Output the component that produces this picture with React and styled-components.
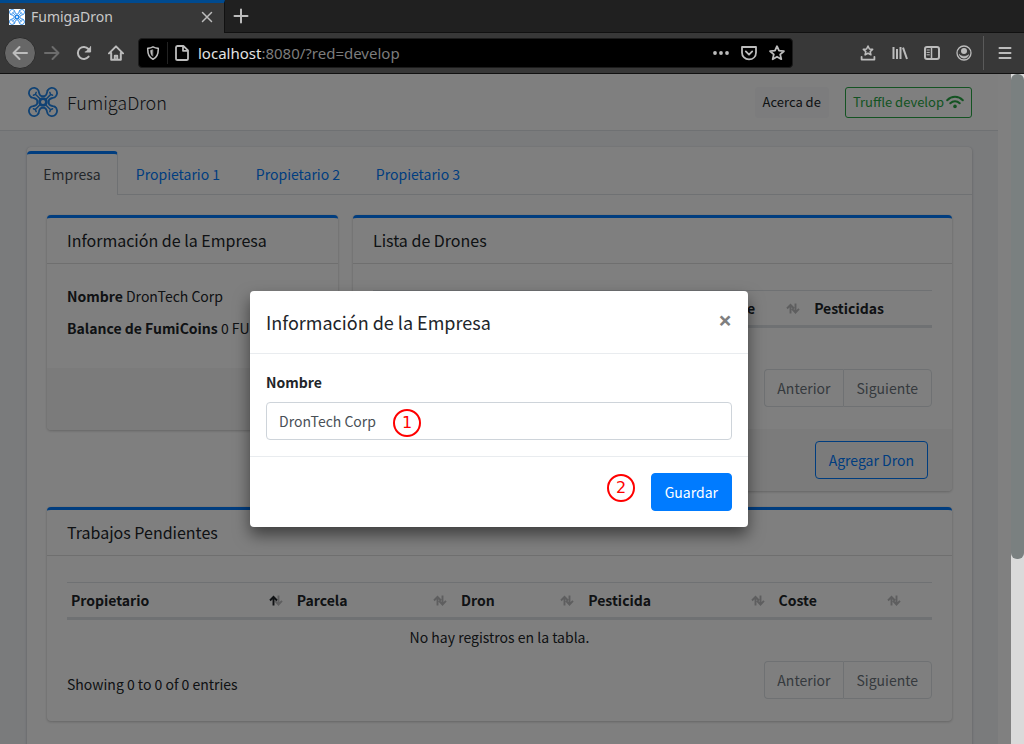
import React from 'react';
import styled, { createGlobalStyle, css } from 'styled-components';

const sans = '"Noto Sans CJK SC", "Noto Sans", sans-serif';
const ui = '"Noto Sans", "Open Sans", sans-serif';

const GlobalStyle = createGlobalStyle`
  *, *::before, *::after { box-sizing: border-box; }
  body { margin: 0; font: 400 14px/24px ${sans}; color: #212529; }
  h1, h2, p { margin: 0; font-weight: 400; }
  button, input { font: inherit; color: inherit; margin: 0; }
  svg { display: block; flex: none; }
`;

const Window = styled.div`
  display: flex;
  flex-direction: column;
  height: 100vh;
  overflow: hidden;
  background: #383838;
`;

/* Browser chrome */
const TabStrip = styled.div`
  display: flex;
  flex: none;
  height: 33px;
  background: #202020;
  border-bottom: 1px solid #111;
  font-family: ${ui};
`;

const BrowserTab = styled.div`
  display: flex;
  align-items: center;
  width: 225px;
  height: 33px;
  padding: 0 11px 2px 9px;
  gap: 6px;
  background: #383838;
  border-top: 3px solid #004a8f;
  border-right: 1px solid #111;
  color: #c8c8c8;
  font-size: 14px;
`;

const TabTitle = styled.span`
  flex: 1;
`;

const Favicon = styled.span`
  width: 16px;
  height: 16px;
  background: #fff;
`;

const ChromeButton = styled.button`
  display: grid;
  place-items: center;
  flex: none;
  width: ${(p) => p.$w || 32}px;
  height: 32px;
  padding: 0;
  border: 0;
  background: none;
  color: ${(p) => (p.$dim ? '#6c6c6c' : '#bcbcbc')};
  ${(p) => p.$round && css`
    border-radius: 50%;
    background: #676767;
    border: 1px solid #2c2c2c;
  `}
`;

const Toolbar = styled.div`
  display: flex;
  align-items: center;
  flex: none;
  height: 41px;
  padding: 0 3px 0 4px;
  border-bottom: 1px solid #111;
`;

const UrlBar = styled.div`
  display: flex;
  align-items: center;
  flex: 1;
  height: 30px;
  margin: 0 59px 0 6px;
  padding-right: 1px;
  background: #000;
  border: 1px solid #1c1c1c;
  border-radius: 4px;
`;

const UrlDivider = styled.span`
  width: 1px;
  height: 22px;
  background: #222;
`;

const UrlText = styled.span`
  flex: 1;
  padding-left: 2px;
  font-family: ${ui};
  font-size: 15px;
  line-height: 28px;
  color: #7c7c7c;
  b { font-weight: 400; color: #e2e2e2; }
`;

const ToolDivider = styled.span`
  width: 1px;
  height: 34px;
  margin: 0 5px 0 3px;
  background: #5a5a5a;
`;

const Viewport = styled.div`
  display: flex;
  flex: 1;
  min-height: 0;
`;

const Page = styled.div`
  position: relative;
  flex: 1;
  min-width: 0;
  overflow: hidden;
  background: #f4f6f9;
`;

const Gutter = styled.div`
  flex: none;
  width: 13px;
  background: #808080;
`;

const ScrollTrack = styled.div`
  flex: none;
  width: 13px;
  background: #dadada;
`;

const ScrollThumb = styled.div`
  height: 485px;
  border-radius: 6px;
  background: #7a8080;
`;

/* Application */
const Header = styled.header`
  display: flex;
  align-items: center;
  gap: 16px;
  height: 57px;
  padding: 0 26px 0 28px;
  background: #fff;
  border-bottom: 1px solid #dee2e6;
`;

const Brand = styled.a`
  display: flex;
  align-items: center;
  gap: 9px;
  margin-right: auto;
  color: #212529;
  font-size: 18px;
  font-weight: 300;
  text-decoration: none;
`;

const Button = styled.button`
  display: flex;
  align-items: center;
  gap: 2px;
  height: ${(p) => (p.$small ? 31 : 38)}px;
  padding: 0 ${(p) => (p.$small ? 7 : 13)}px;
  font-size: ${(p) => (p.$small ? 13 : 14)}px;
  border: 1px solid ${(p) => p.$border || p.$bg};
  border-radius: ${(p) => (p.$small ? 3 : 4)}px;
  background: ${(p) => p.$bg || 'transparent'};
  color: ${(p) => p.$color};
`;

const Main = styled.main`
  padding: 16px 26px 16px 27px;
`;

const shadow = '0 0 1px rgba(0,0,0,.125), 0 1px 3px rgba(0,0,0,.2)';

const Panel = styled.div`
  background: #fff;
  border-radius: 4px;
  box-shadow: ${shadow};
`;

const Tabs = styled.nav`
  display: flex;
  padding-top: 4px;
  border-bottom: 1px solid #dee2e6;
`;

const Tab = styled.a`
  min-width: 120px;
  height: 44px;
  margin-bottom: -1px;
  padding: 8px 16px;
  border-top: 3px solid transparent;
  color: #007bff;
  text-align: center;
  text-decoration: none;
  ${(p) => p.$active && css`
    min-width: 91px;
    color: #495057;
    background: #fff;
    border-top-color: #007bff;
    border-right: 1px solid #dee2e6;
    border-radius: 4px 4px 0 0;
  `}
`;

const Cards = styled.div`
  display: grid;
  grid-template-columns: 291fr 599fr;
  gap: 16px 15px;
  align-items: start;
  padding: 20px 20px 40px;
`;

const CardBox = styled.section`
  grid-column: ${(p) => (p.$wide ? '1 / -1' : 'auto')};
  background: #fff;
  border-top: 3px solid #007bff;
  border-radius: 4px;
  box-shadow: ${shadow};
`;

const CardTitle = styled.h2`
  padding: 10px 20px 11px;
  font-size: 16px;
  line-height: 24px;
  border-bottom: 1px solid #dfdfdf;
`;

const CardBody = styled.div`
  padding: ${(p) => (p.$table ? '26px 20px 22px' : '20px 20px 28px')};
`;

const Fact = styled.p`
  & + & { margin-top: 8px; }
`;

const CardFooter = styled.div`
  display: flex;
  justify-content: flex-end;
  min-height: 62px;
  padding: 12px 24px;
  background: #f7f7f7;
  border-radius: 0 0 4px 4px;
`;

const Table = styled.table`
  width: 100%;
  table-layout: fixed;
  border-spacing: 0;
  white-space: nowrap;
`;

const Th = styled.th`
  padding: 5px 10px 5px 4px;
  text-align: left;
  border-top: 1px solid #dee2e6;
  border-bottom: 3px solid #dee2e6;
`;

const ThInner = styled.span`
  display: flex;
  align-items: center;
  justify-content: space-between;
`;

const EmptyCell = styled.td`
  padding: 5px 4px;
  text-align: center;
`;

const TableFoot = styled.div`
  display: flex;
  align-items: center;
  justify-content: space-between;
  padding-top: 7px;
`;

const TableInfo = styled.p`
  padding-top: 8px;
`;

const Pager = styled.div`
  display: flex;
`;

const PageButton = styled.button`
  height: 38px;
  padding: 0 12px;
  border: 1px solid #dee2e6;
  background: #fff;
  color: #6c757d;
  &:first-child { border-right: 0; padding: 0 13px 0 12px; border-radius: 4px 0 0 4px; }
  &:last-child { padding: 0 13px 0 12px; border-radius: 0 4px 4px 0; }
`;

/* Modal */
const Overlay = styled.div`
  position: absolute;
  inset: 0;
  display: grid;
  place-items: center;
  background: rgba(0, 0, 0, 0.5);
`;

const Dialog = styled.form`
  width: 100%;
  max-width: 498px;
  background: #fff;
  border-radius: 4px;
  box-shadow: 0 8px 16px rgba(0, 0, 0, 0.5);
`;

const DialogHeader = styled.div`
  display: flex;
  justify-content: space-between;
  padding: 16px;
  border-bottom: 1px solid #e9ecef;
`;

const DialogTitle = styled.h2`
  font-size: 18px;
  line-height: 30px;
`;

const Close = styled.button`
  height: 26px;
  padding: 0;
  border: 0;
  background: none;
  color: #7f7f7f;
  font: 700 24px/26px ${ui};
`;

const DialogBody = styled.div`
  padding: 16px;
`;

const Label = styled.label`
  display: block;
  margin-bottom: 8px;
  font-weight: 700;
`;

const Field = styled.div`
  position: relative;
`;

const Input = styled.input`
  display: block;
  width: 100%;
  height: 38px;
  padding: 0 12px;
  border: 1px solid #ced4da;
  border-radius: 4px;
  background: #fff;
  color: #495057;
`;

const DialogFooter = styled.div`
  position: relative;
  display: flex;
  justify-content: flex-end;
  padding: 16px;
  border-top: 1px solid #e9ecef;
`;

const Marker = styled.span`
  position: absolute;
  display: grid;
  place-items: center;
  width: 28px;
  height: 28px;
  border: 2px solid #f00;
  border-radius: 50%;
  color: #f00;
  font: 16px/24px "DejaVu Sans", sans-serif;
`;

const FieldMarker = styled(Marker)`
  top: 7px;
  left: 127px;
`;

const FooterMarker = styled(Marker)`
  top: 17px;
  right: 113px;
`;

/* Drawings */
const Icon = ({ children, size = 16, sw = 2 }) => (
  <svg width={size} height={size} viewBox="0 0 16 16" fill="none" stroke="currentColor" strokeWidth={sw} strokeLinecap="round" strokeLinejoin="round" aria-hidden="true">
    {children}
  </svg>
);

const Drone = ({ size, color = '#2185e8' }) => (
  <svg width={size} height={size} viewBox="0 0 30 30" fill="none" stroke={color} strokeWidth="1.8" strokeLinecap="round" strokeLinejoin="round" aria-hidden="true">
    {[0, 90, 180, 270].map((a) => (
      <g key={a} transform={`rotate(${a} 15 15)`}>
        <path d="M3.4 10.4A5.1 5.1 0 1 1 10.4 3.4L11 5.6C11.4 7.6 12.2 8.8 13.6 9.2H16.4C17.8 8.8 18.6 7.6 19 5.6L19.6 3.4" />
        <path d="M8.2 5.4L7.4 7.2L12.2 12M5.4 8.2L7.2 7.4" strokeWidth="1.5" />
      </g>
    ))}
    <circle cx="15" cy="15" r="3.4" strokeWidth="2.8" />
  </svg>
);

const SortArrows = ({ active }) => (
  <svg width="14" height="11" viewBox="0 0 14 11" fill="none" stroke="#212529" strokeWidth="1.9" aria-hidden="true">
    <path d="M4.5 10.5V1.5M1 5.5L4.5 1.8L8 5.5" opacity={active ? 1 : 0.3} />
    <path d="M9.5 .5V9.5M6 5.8L9.5 9.5L13 5.8" opacity="0.3" />
  </svg>
);

const Wifi = () => (
  <svg width="18" height="14" viewBox="0 0 18 14" fill="none" stroke="currentColor" strokeWidth="2" strokeLinecap="round" aria-hidden="true">
    <path d="M1.2 5.2C5.6 .6 12.4 .6 16.8 5.2M4.3 8.2C7 5.5 11 5.5 13.7 8.2" />
    <circle cx="9" cy="11.4" r="1.8" fill="currentColor" stroke="none" />
  </svg>
);

const starPath = 'M8 1.2L10 5.7L14.9 6.2L11.2 9.4L12.3 14.2L8 11.7L3.7 14.2L4.8 9.4L1.1 6.2L6 5.7Z';

function DataTable({ columns }) {
  return (
    <>
      <Table>
        <colgroup>
          {columns.map((c, i) => <col key={i} style={{ width: c.width }} />)}
        </colgroup>
        <thead>
          <tr>
            {columns.map((c, i) => (
              <Th key={i}>
                <ThInner>
                  {c.name}
                  {c.sort && <SortArrows active={c.sort === 'asc'} />}
                </ThInner>
              </Th>
            ))}
          </tr>
        </thead>
        <tbody>
          <tr><EmptyCell colSpan={columns.length}>No hay registros en la tabla.</EmptyCell></tr>
        </tbody>
      </Table>
      <TableFoot>
        <TableInfo>Showing 0 to 0 of 0 entries</TableInfo>
        <Pager>
          <PageButton type="button">Anterior</PageButton>
          <PageButton type="button">Siguiente</PageButton>
        </Pager>
      </TableFoot>
    </>
  );
}

const droneColumns = [
  { name: '', width: '60.8%' },
  { name: 'Coste', width: '17.4%', sort: 'both' },
  { name: 'Pesticidas', width: '21.8%' },
];

const jobColumns = [
  { name: 'Propietario', width: '26.1%', sort: 'asc' },
  { name: 'Parcela', width: '19%', sort: 'both' },
  { name: 'Dron', width: '14.7%', sort: 'both' },
  { name: 'Pesticida', width: '22%', sort: 'both' },
  { name: 'Coste', width: '15.8%', sort: 'both' },
  { name: '', width: '2.4%' },
];

export default function App() {
  return (
    <Window>
      <GlobalStyle />
      <TabStrip>
        <BrowserTab>
          <Favicon><Drone size={16} /></Favicon>
          <TabTitle>FumigaDron</TabTitle>
          <ChromeButton $w={12} aria-label="Cerrar pestaña">
            <Icon size={12} sw={2}><path d="M2 2L14 14M14 2L2 14" /></Icon>
          </ChromeButton>
        </BrowserTab>
        <ChromeButton aria-label="Nueva pestaña">
          <Icon size={16}><path d="M8 1.5V14.5M1.5 8H14.5" /></Icon>
        </ChromeButton>
      </TabStrip>
      <Toolbar>
        <ChromeButton $round aria-label="Atrás">
          <Icon><path d="M15 8H1.5M7.5 2L1.5 8L7.5 14" /></Icon>
        </ChromeButton>
        <ChromeButton $dim aria-label="Adelante">
          <Icon><path d="M1 8H14.5M8.5 2L14.5 8L8.5 14" /></Icon>
        </ChromeButton>
        <ChromeButton aria-label="Recargar">
          <Icon><path d="M12.6 11.6A6 6 0 1 1 12.4 4" /><path d="M14.6 1.6V7H9.2" fill="currentColor" strokeWidth="1" /></Icon>
        </ChromeButton>
        <ChromeButton aria-label="Inicio">
          <Icon><path d="M1 8.4L8 1.4L15 8.4M3.2 8V14.8H12.8V8M6.8 14.5V10.8H9.2V14.5" /></Icon>
        </ChromeButton>
        <UrlBar>
          <ChromeButton $w={28} aria-label="Protección">
            <Icon size={14} sw={1.8}><path d="M8 1C10 2.2 12 2.6 14 2.7C14.2 8 13 13 8 15.2C3 13 1.8 8 2 2.7C4 2.6 6 2.2 8 1Z" /><path d="M7.4 4.4L5.2 5C5.3 8 5.8 10.2 7.4 11.5Z" fill="currentColor" strokeWidth="0.6" /></Icon>
          </ChromeButton>
          <UrlDivider />
          <ChromeButton $w={28} aria-label="Información del sitio">
            <Icon sw={1.8}><path d="M3.4 1H9.4L14 5.4V13.4A1.6 1.6 0 0 1 12.4 15H3.6A1.6 1.6 0 0 1 2 13.4V2.6A1.6 1.6 0 0 1 3.4 1ZM9 1.4V5.8H13.6" /></Icon>
          </ChromeButton>
          <UrlText><b>localhost</b>:8080/?red=develop</UrlText>
          <ChromeButton $w={28} aria-label="Acciones">
            <Icon><g fill="currentColor" stroke="none"><circle cx="2" cy="8" r="1.9" /><circle cx="8" cy="8" r="1.9" /><circle cx="14" cy="8" r="1.9" /></g></Icon>
          </ChromeButton>
          <ChromeButton $w={28} aria-label="Guardar en Pocket">
            <Icon sw={1.8}><path d="M1 2H15V7.4C15 11.6 12 14.4 8 14.4S1 11.6 1 7.4ZM4.8 6.4L8 9.6L11.2 6.4" /></Icon>
          </ChromeButton>
          <ChromeButton $w={28} aria-label="Marcador">
            <Icon sw={1.8}><path d={starPath} /></Icon>
          </ChromeButton>
        </UrlBar>
        <ChromeButton aria-label="Marcadores">
          <Icon sw={1.8}><path d="M8 1L9.4 4L12.6 4.4L10.2 6.6L10.9 9.8L8 8.2L5.1 9.8L5.8 6.6L3.4 4.4L6.6 4Z" strokeWidth="1.6" /><path d="M1.6 11.8V14.6H14.4V11.8" /></Icon>
        </ChromeButton>
        <ChromeButton aria-label="Biblioteca">
          <Icon><path d="M1.5 2V14M5 4V14M8.5 2V14M11 2.6L15 14" strokeLinecap="butt" /></Icon>
        </ChromeButton>
        <ChromeButton aria-label="Barra lateral">
          <Icon><rect x="1" y="2" width="14" height="12" rx="2" /><path d="M7.5 2V14" strokeWidth="1.5" /><path d="M3 5H5.4M3 7.4H5.4M3 9.8H5.4" strokeWidth="1" /></Icon>
        </ChromeButton>
        <ChromeButton aria-label="Cuenta">
          <Icon><circle cx="8" cy="8" r="7" strokeWidth="1.3" /><circle cx="8" cy="6" r="3" fill="currentColor" stroke="none" /><path d="M3.4 9.6C5 12 11 12 12.6 9.6C12.4 14.4 3.6 14.4 3.4 9.6Z" fill="currentColor" strokeWidth="0.6" /></Icon>
        </ChromeButton>
        <ToolDivider />
        <ChromeButton aria-label="Menú">
          <Icon><path d="M2.5 3H13.5M2.5 8H13.5M2.5 13H13.5" /></Icon>
        </ChromeButton>
      </Toolbar>
      <Viewport>
        <Page>
          <Header>
            <Brand href="#"><Drone size={30} />FumigaDron</Brand>
            <Button $small $bg="#f8f9fa" $color="#212529">Acerca de</Button>
            <Button $small $border="#28a745" $color="#28a745">Truffle develop <Wifi /></Button>
          </Header>
          <Main>
            <Panel>
              <Tabs>
                <Tab href="#empresa" $active>Empresa</Tab>
                <Tab href="#p1">Propietario 1</Tab>
                <Tab href="#p2">Propietario 2</Tab>
                <Tab href="#p3">Propietario 3</Tab>
              </Tabs>
              <Cards>
                <CardBox>
                  <CardTitle>Información de la Empresa</CardTitle>
                  <CardBody>
                    <Fact><b>Nombre</b> DronTech Corp</Fact>
                    <Fact><b>Balance de FumiCoins</b> 0 FUMI</Fact>
                  </CardBody>
                  <CardFooter />
                </CardBox>
                <CardBox>
                  <CardTitle>Lista de Drones</CardTitle>
                  <CardBody $table><DataTable columns={droneColumns} /></CardBody>
                  <CardFooter>
                    <Button $border="#007bff" $color="#007bff">Agregar Dron</Button>
                  </CardFooter>
                </CardBox>
                <CardBox $wide>
                  <CardTitle>Trabajos Pendientes</CardTitle>
                  <CardBody $table><DataTable columns={jobColumns} /></CardBody>
                </CardBox>
              </Cards>
            </Panel>
          </Main>
          <Overlay>
            <Dialog role="dialog" aria-labelledby="dialog-title">
              <DialogHeader>
                <DialogTitle id="dialog-title">Información de la Empresa</DialogTitle>
                <Close type="button" aria-label="Cerrar">×</Close>
              </DialogHeader>
              <DialogBody>
                <Label htmlFor="nombre">Nombre</Label>
                <Field>
                  <Input id="nombre" type="text" defaultValue="DronTech Corp" />
                  <FieldMarker>1</FieldMarker>
                </Field>
              </DialogBody>
              <DialogFooter>
                <FooterMarker>2</FooterMarker>
                <Button type="button" $bg="#007bff" $color="#fff">Guardar</Button>
              </DialogFooter>
            </Dialog>
          </Overlay>
        </Page>
        <Gutter />
        <ScrollTrack><ScrollThumb /></ScrollTrack>
      </Viewport>
    </Window>
  );
}
